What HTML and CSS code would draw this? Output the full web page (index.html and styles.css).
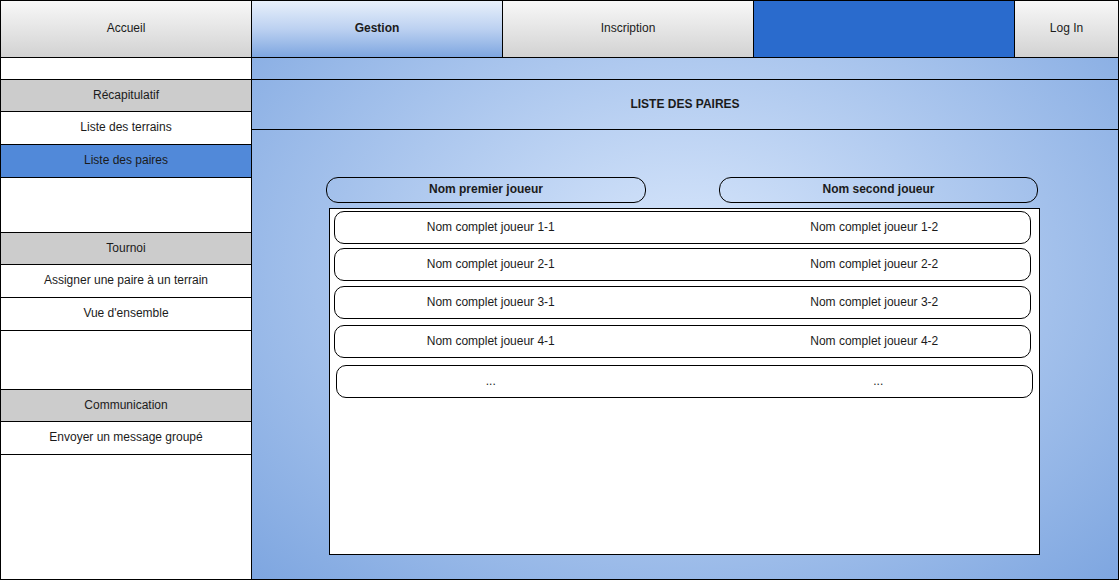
FILE: index.html
```html
<!DOCTYPE html>
<html lang="fr">
<head>
<meta charset="utf-8">
<title>Liste des paires</title>
<link rel="stylesheet" href="styles.css">
</head>
<body>
<div class="frame">
  <nav class="topnav">
    <div class="tab tab-gray tab-w">Accueil</div>
    <div class="tab tab-active tab-w">Gestion</div>
    <div class="tab tab-gray tab-w">Inscription</div>
    <div class="tab tab-blue"></div>
    <div class="tab tab-gray tab-login">Log In</div>
  </nav>
  <div class="body">
    <aside class="sidebar">
      <div class="side-row blank-s"></div>
      <div class="side-row section">Récapitulatif</div>
      <div class="side-row item">Liste des terrains</div>
      <div class="side-row item selected">Liste des paires</div>
      <div class="side-row blank-m"></div>
      <div class="side-row section">Tournoi</div>
      <div class="side-row item">Assigner une paire à un terrain</div>
      <div class="side-row item">Vue d'ensemble</div>
      <div class="side-row blank-l"></div>
      <div class="side-row section">Communication</div>
      <div class="side-row item">Envoyer un message groupé</div>
      <div class="side-row filler"></div>
    </aside>
    <main class="main">
      <div class="strip"></div>
      <div class="page-title">LISTE DES PAIRES</div>
      <div class="content">
        <div class="col-heads">
          <div class="pill pill-1">Nom premier joueur</div>
          <div class="pill pill-2">Nom second joueur</div>
        </div>
        <div class="table">
          <div class="row"><span>Nom complet joueur 1-1</span><span>Nom complet joueur 1-2</span></div>
          <div class="row"><span>Nom complet joueur 2-1</span><span>Nom complet joueur 2-2</span></div>
          <div class="row row-3"><span>Nom complet joueur 3-1</span><span>Nom complet joueur 3-2</span></div>
          <div class="row row-4"><span>Nom complet joueur 4-1</span><span>Nom complet joueur 4-2</span></div>
          <div class="row row-more"><span>...</span><span>...</span></div>
        </div>
      </div>
    </main>
  </div>
</div>
</body>
</html>
```
FILE: styles.css
```css
* { box-sizing: border-box; }
html, body { margin: 0; padding: 0; }
body {
  width: 1119px;
  height: 580px;
  font-family: "Liberation Sans", Arial, Helvetica, sans-serif;
  font-size: 12px;
  color: #1b1b1b;
  background: #fff;
}
.frame {
  width: 1119px;
  height: 580px;
  border: 1px solid #000;
  display: flex;
  flex-direction: column;
}
.topnav {
  display: flex;
  height: 57px;
  border-bottom: 1px solid #000;
  flex: none;
}
.tab {
  display: flex;
  align-items: center;
  justify-content: center;
  height: 56px;
  padding-bottom: 2px;
  border-right: 1px solid #000;
}
.tab-w { width: 251px; }
.tab-blue { width: 261px; background: #2a6bcd; }
.tab-login { width: 103px; border-right: none; }
.tab-gray { background: linear-gradient(#f8f8f8, #d2d2d2); }
.tab-active {
  background: linear-gradient(#e8f0fb 0%, #bcd1f1 50%, #7ea6e0 100%);
  font-weight: bold;
}
.body {
  flex: 1;
  display: flex;
  min-height: 0;
}
.sidebar {
  width: 251px;
  border-right: 1px solid #000;
  display: flex;
  flex-direction: column;
  flex: none;
}
.side-row {
  border-bottom: 1px solid #000;
  display: flex;
  align-items: center;
  justify-content: center;
  padding-bottom: 2px;
  flex: none;
}
.blank-s { height: 22px; }
.section { height: 32px; background: #cccccc; }
.item { height: 33px; }
.selected { background: #5189d9; }
.blank-m { height: 55px; }
.blank-l { height: 59px; }
.filler { flex: 1; border-bottom: none; }
.main {
  flex: 1;
  display: flex;
  flex-direction: column;
  background: radial-gradient(ellipse farthest-corner at 50% 40%, #dae8fc 0%, #7ea6e0 100%);
}
.strip {
  height: 22px;
  border-bottom: 1px solid #000;
}
.page-title {
  height: 50px;
  border-bottom: 1px solid #000;
  display: flex;
  align-items: center;
  justify-content: center;
  padding-bottom: 2px;
  font-weight: bold;
}
.content {
  padding: 47px 0 0 74px;
}
.col-heads {
  display: flex;
  gap: 73px;
}
.pill {
  height: 26px;
  border: 1px solid #000;
  border-radius: 12px;
  display: flex;
  align-items: center;
  justify-content: center;
  padding-bottom: 2px;
  font-weight: bold;
}
.pill-1 { width: 320px; }
.pill-2 { width: 319px; }
.table {
  margin: 5px 0 0 3px;
  width: 711px;
  height: 347px;
  background: #fff;
  border: 1px solid #000;
  padding: 2px 0 0 4px;
  display: flex;
  flex-direction: column;
  gap: 4px;
}
.row {
  width: 697px;
  height: 33px;
  border: 1px solid #000;
  border-radius: 10px;
  display: grid;
  grid-template-columns: 1fr 1fr;
  column-gap: 72px;
  align-items: center;
  text-align: center;
  padding-bottom: 2px;
  flex: none;
}
.row-3 { margin-top: 1px; }
.row-4 { margin-top: 2px; }
.row-more {
  margin: 3px 0 0 2px;
  column-gap: 80px;
}
```
